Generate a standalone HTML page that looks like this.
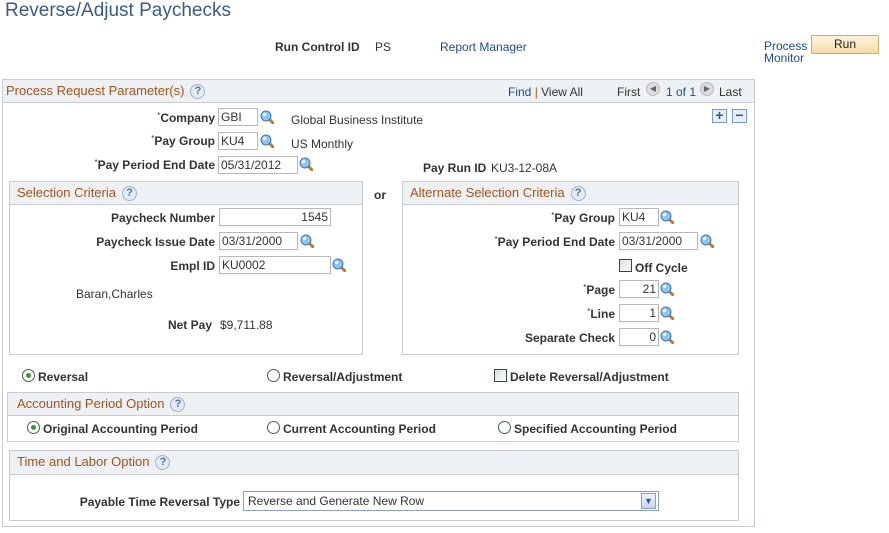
<!DOCTYPE html>
<html><head><meta charset="utf-8"><style>
*{margin:0;padding:0;box-sizing:border-box}
body{width:889px;height:533px;background:#fff;font-family:"Liberation Sans",Arial,sans-serif;font-size:12px;color:#333;position:relative;overflow:hidden}
.a{position:absolute;white-space:nowrap;line-height:14px}
.l{position:absolute;white-space:nowrap;line-height:14px;font-weight:bold;text-align:right}
.l s{text-decoration:none;font-size:8px;vertical-align:4px;line-height:0;font-weight:normal}
.in{position:absolute;height:18px;border:1px solid #b8b8b8;background:#fff;line-height:16px;padding:0 2px;font-size:12px;color:#333;white-space:nowrap}
.r{text-align:right}
.box{position:absolute;border:1px solid #c8ccd0;background:#fff}
.hd{position:absolute;left:0;right:0;top:0;background:#eef1f3;border-bottom:1px solid #c8ccd0}
.ht{position:absolute;left:7px;font-size:13px;color:#a5521b;line-height:16px;white-space:nowrap}
.q{display:inline-block;width:15px;height:15px;border-radius:50%;border:1px solid #9db2cc;background:#e4ebf4;color:#4c74a8;font-size:11px;font-weight:bold;text-align:center;line-height:13px;vertical-align:middle;margin-left:6px}
.mg{position:absolute;width:14px;height:14px}
.lk{color:#1c4c8c}
.rad{position:absolute;width:13px;height:13px;border-radius:50%;border:1px solid #4a5a6a;background:#fff}
.rad.on::after{content:"";position:absolute;left:3px;top:3px;width:5px;height:5px;border-radius:50%;background:#3a9a3a}
.cb{position:absolute;width:13px;height:13px;border:1px solid #334455;background:linear-gradient(135deg,#ddd,#fff)}
</style></head><body>
<svg width="0" height="0" style="position:absolute"><defs><symbol id="m" viewBox="0 0 14 14"><line x1="8" y1="8" x2="13" y2="13" stroke="#c07a30" stroke-width="3" stroke-linecap="round"/><circle cx="6" cy="6" r="5" fill="#8ec4ee" stroke="#3a78b8" stroke-width="1"/><circle cx="4.5" cy="4.5" r="1.8" fill="#e8f6ff"/></symbol></defs></svg>

<div class="a" style="left:5px;top:0px;font-size:19px;line-height:22px;color:#3b5a86">Reverse/Adjust Paychecks</div>
<div class="l" style="left:275px;top:40px">Run Control ID</div>
<div class="a" style="left:375px;top:40px">PS</div>
<div class="a lk" style="left:440px;top:40px">Report Manager</div>
<div class="a lk" style="left:764px;top:40px;line-height:12px">Process<br>Monitor</div>
<div style="position:absolute;left:811px;top:35px;width:68px;height:19px;border:1px solid #d9a85a;border-radius:2px;background:linear-gradient(#fdf3e0,#f8dcaa);text-align:center;line-height:17px;font-size:12px;color:#222">Run</div>

<div class="box" style="left:2px;top:79px;width:753px;height:448px">
 <div class="hd" style="height:23px"><div class="ht" style="top:3px;left:3px">Process Request Parameter(s)<span class="q">?</span></div>
 <div class="a" style="left:505px;top:5px"><span class="lk">Find</span> <span style="color:#a5521b">|</span> View All</div>
 <div class="a" style="left:614px;top:5px">First</div>
 <div style="position:absolute;left:643px;top:2px;width:14px;height:14px;border-radius:50%;background:#ddd;border:1px solid #bbb;font-size:8px;line-height:12px;text-align:center;color:#666">◀</div>
 <div class="a lk" style="left:663px;top:5px">1 of 1</div>
 <div style="position:absolute;left:697px;top:2px;width:14px;height:14px;border-radius:50%;background:#ddd;border:1px solid #bbb;font-size:8px;line-height:12px;text-align:center;color:#666">▶</div>
 <div class="a" style="left:716px;top:5px">Last</div>
 </div>
</div>
<div style="position:absolute;left:712px;top:109px;width:15px;height:14px;border:1px solid #7a9cc4;background:#e8eef6;color:#2c5ca0;font-weight:bold;font-size:14px;line-height:11px;text-align:center">+</div>
<div style="position:absolute;left:732px;top:109px;width:15px;height:14px;border:1px solid #7a9cc4;background:#e8eef6;color:#2c5ca0;font-weight:bold;font-size:14px;line-height:11px;text-align:center">−</div>

<div class="l" style="right:674px;top:111px"><s>*</s>Company</div>
<div class="in" style="left:218px;top:108px;width:40px">GBI</div>
<svg class="mg" style="left:260px;top:110px"><use href="#m"/></svg>
<div class="a" style="left:291px;top:113px">Global Business Institute</div>
<div class="l" style="right:674px;top:134px"><s>*</s>Pay Group</div>
<div class="in" style="left:218px;top:132px;width:40px">KU4</div>
<svg class="mg" style="left:260px;top:134px"><use href="#m"/></svg>
<div class="a" style="left:291px;top:137px">US Monthly</div>
<div class="l" style="right:674px;top:158px"><s>*</s>Pay Period End Date</div>
<div class="in" style="left:218px;top:156px;width:80px">05/31/2012</div>
<svg class="mg" style="left:299px;top:157px"><use href="#m"/></svg>
<div class="l" style="left:423px;top:161px">Pay Run ID</div>
<div class="a" style="left:491px;top:161px">KU3-12-08A</div>

<div class="box" style="left:9px;top:181px;width:354px;height:174px">
 <div class="hd" style="height:23px;border-bottom-color:#c8ccd0"><div class="ht" style="top:3px">Selection Criteria<span class="q">?</span></div></div>
</div>
<div class="l" style="left:374px;top:188px">or</div>
<div class="box" style="left:402px;top:181px;width:337px;height:174px">
 <div class="hd" style="height:23px"><div class="ht" style="top:3px">Alternate Selection Criteria<span class="q">?</span></div></div>
</div>

<div class="l" style="right:674px;top:211px">Paycheck Number</div>
<div class="in r" style="left:219px;top:208px;width:112px">1545</div>
<div class="l" style="right:674px;top:235px">Paycheck Issue Date</div>
<div class="in" style="left:219px;top:232px;width:79px">03/31/2000</div>
<svg class="mg" style="left:300px;top:234px"><use href="#m"/></svg>
<div class="l" style="right:674px;top:259px">Empl ID</div>
<div class="in" style="left:219px;top:256px;width:112px">KU0002</div>
<svg class="mg" style="left:332px;top:258px"><use href="#m"/></svg>
<div class="a" style="left:76px;top:287px">Baran,Charles</div>
<div class="l" style="right:677px;top:318px">Net Pay</div>
<div class="a" style="left:220px;top:318px">$9,711.88</div>

<div class="l" style="right:274px;top:211px"><s>*</s>Pay Group</div>
<div class="in" style="left:619px;top:208px;width:40px">KU4</div>
<svg class="mg" style="left:660px;top:210px"><use href="#m"/></svg>
<div class="l" style="right:274px;top:235px"><s>*</s>Pay Period End Date</div>
<div class="in" style="left:619px;top:232px;width:79px">03/31/2000</div>
<svg class="mg" style="left:700px;top:234px"><use href="#m"/></svg>
<div class="cb" style="left:619px;top:259px"></div>
<div class="l" style="left:635px;top:261px">Off Cycle</div>
<div class="l" style="right:274px;top:283px"><s>*</s>Page</div>
<div class="in r" style="left:619px;top:280px;width:40px">21</div>
<svg class="mg" style="left:660px;top:282px"><use href="#m"/></svg>
<div class="l" style="right:274px;top:307px"><s>*</s>Line</div>
<div class="in r" style="left:619px;top:304px;width:40px">1</div>
<svg class="mg" style="left:660px;top:306px"><use href="#m"/></svg>
<div class="l" style="right:274px;top:331px">Separate Check</div>
<div class="in r" style="left:619px;top:328px;width:40px">0</div>
<svg class="mg" style="left:660px;top:330px"><use href="#m"/></svg>

<div class="rad on" style="left:22px;top:369px"></div>
<div class="l" style="left:38px;top:370px">Reversal</div>
<div class="rad" style="left:267px;top:369px"></div>
<div class="l" style="left:283px;top:370px">Reversal/Adjustment</div>
<div class="cb" style="left:494px;top:369px"></div>
<div class="l" style="left:510px;top:370px">Delete Reversal/Adjustment</div>

<div class="box" style="left:7px;top:392px;width:732px;height:50px">
 <div class="hd" style="height:23px"><div class="ht" style="top:3px;left:9px">Accounting Period Option<span class="q">?</span></div></div>
</div>
<div class="rad on" style="left:27px;top:421px"></div>
<div class="l" style="left:43px;top:422px">Original Accounting Period</div>
<div class="rad" style="left:267px;top:421px"></div>
<div class="l" style="left:283px;top:422px">Current Accounting Period</div>
<div class="rad" style="left:498px;top:421px"></div>
<div class="l" style="left:514px;top:422px">Specified Accounting Period</div>

<div class="box" style="left:9px;top:450px;width:730px;height:71px">
 <div class="hd" style="height:24px"><div class="ht" style="top:3px">Time and Labor Option<span class="q">?</span></div></div>
</div>
<div class="l" style="right:649px;top:495px">Payable Time Reversal Type</div>
<div class="in" style="left:243px;top:491px;width:416px;height:20px;border-color:#8aa0c0;line-height:18px;padding-left:4px">Reverse and Generate New Row</div>
<div style="position:absolute;left:641px;top:493px;width:15px;height:16px;border:1px solid #8aa0c0;background:linear-gradient(#eef3fa,#c8d6ea);color:#2c5ca0;font-size:9px;line-height:14px;text-align:center">▼</div>
</body></html>
